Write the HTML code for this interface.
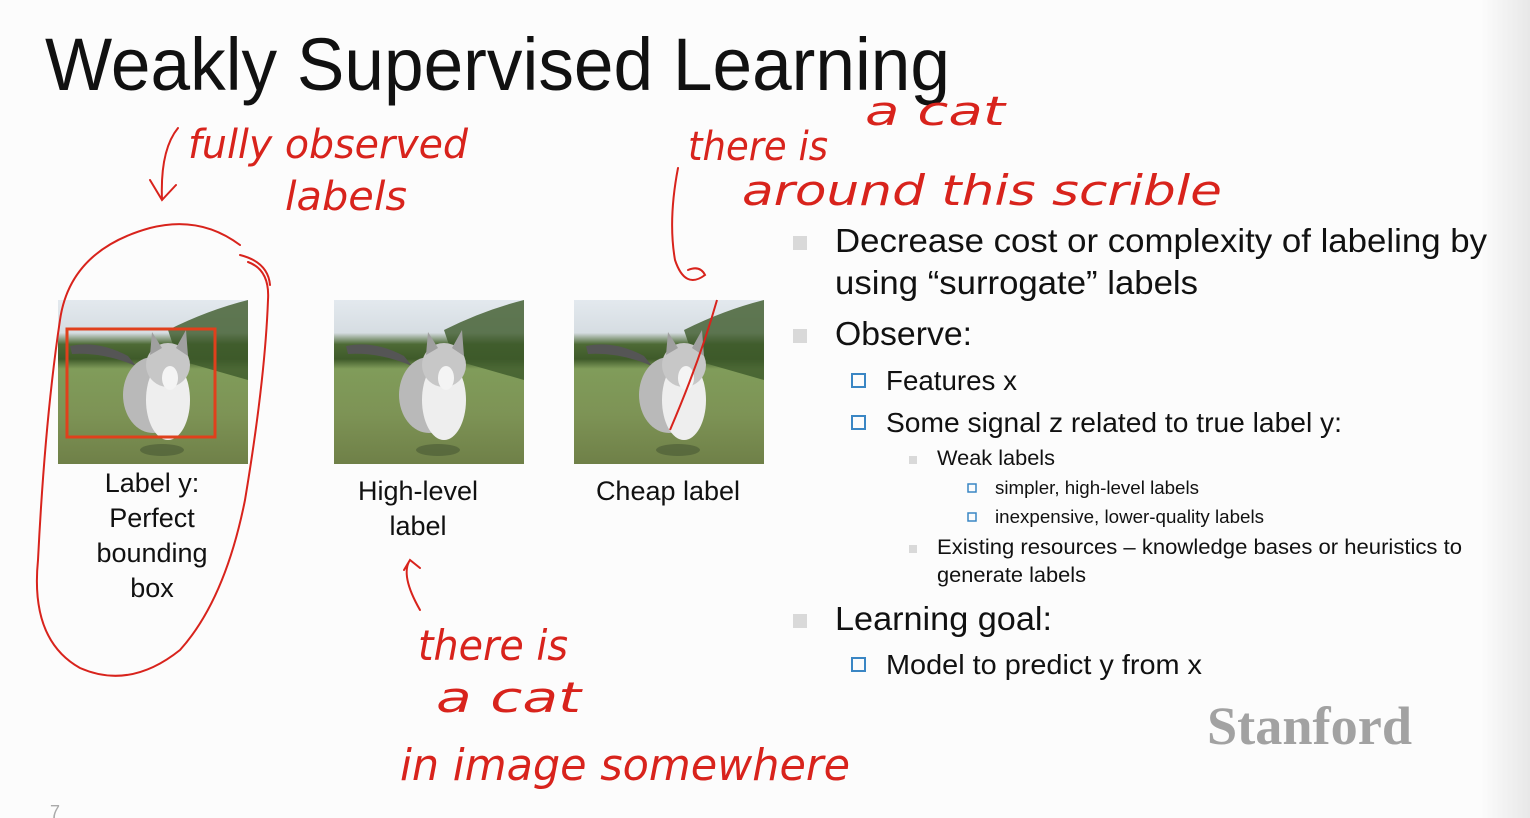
<!DOCTYPE html>
<html><head><meta charset="utf-8"><style>
html,body{margin:0;padding:0;background:#fcfcfc;}
svg{display:block}
.h{font-family:"Liberation Sans",sans-serif;fill:#111}
.r{font-family:"DejaVu Sans",sans-serif;font-style:italic;font-weight:200;fill:#d8231c}
</style></head><body>
<svg width="1530" height="818" viewBox="0 0 1530 818" xmlns="http://www.w3.org/2000/svg">
<defs>
<linearGradient id="edge" x1="0" x2="1"><stop offset="0" stop-color="#fcfcfc"/><stop offset="1" stop-color="#e8e8e8"/></linearGradient>
<linearGradient id="img" x1="0" y1="0" x2="0" y2="1">
<stop offset="0" stop-color="#e3e9ee"/><stop offset="0.2" stop-color="#d6dde2"/><stop offset="0.27" stop-color="#4d6a35"/><stop offset="0.36" stop-color="#3f5a2a"/><stop offset="0.42" stop-color="#809c5a"/><stop offset="0.7" stop-color="#7d9355"/><stop offset="1" stop-color="#6f8048"/></linearGradient>
<g id="cat">
<rect x="0" y="0" width="190" height="164" fill="url(#img)"/>
<path d="M110 30 Q150 10 190 0 L190 80 L120 60 Z" fill="#3d5a2a" opacity="0.8"/>
<path d="M12 46 Q40 40 70 56 L78 66 Q45 52 14 54 Z" fill="#555"/>
<ellipse cx="95" cy="95" rx="30" ry="38" fill="#b9b9b9"/>
<ellipse cx="110" cy="100" rx="22" ry="40" fill="#eeeeee"/>
<ellipse cx="110" cy="65" rx="22" ry="22" fill="#c7c7c7"/>
<path d="M92 55 L94 32 L104 48 Z M118 48 L128 30 L130 56 Z" fill="#a0a0a0"/>
<ellipse cx="112" cy="78" rx="8" ry="12" fill="#f4f4f4"/>
<ellipse cx="104" cy="150" rx="22" ry="6" fill="#405030" opacity="0.5"/>
</g>
</defs>
<rect x="1480" y="0" width="50" height="818" fill="url(#edge)"/>
<text class="h" x="45" y="90" font-size="74" textLength="905" lengthAdjust="spacingAndGlyphs">Weakly Supervised Learning</text>

<use href="#cat" x="58" y="300"/>
<use href="#cat" x="334" y="300"/>
<use href="#cat" x="574" y="300"/>
<rect x="67" y="329" width="148" height="108" fill="none" stroke="#e0401c" stroke-width="3"/>
<path d="M717 300 Q700 360 670 430" fill="none" stroke="#d8231c" stroke-width="2"/>

<g class="h" font-size="27" text-anchor="middle">
<text x="152" y="492">Label y:</text><text x="152" y="527">Perfect</text><text x="152" y="562">bounding</text><text x="152" y="597">box</text>
<text x="418" y="500">High-level</text><text x="418" y="535">label</text>
<text x="668" y="500">Cheap label</text>
</g>

<g fill="#d9d9d9">
<rect x="793" y="236" width="14" height="14"/><rect x="793" y="329" width="14" height="14"/><rect x="793" y="614" width="14" height="14"/>
<rect x="909" y="456" width="8" height="8"/><rect x="909" y="545" width="8" height="8"/>
</g>
<g fill="none" stroke="#3a86c4" stroke-width="2">
<rect x="852" y="374" width="13" height="13"/><rect x="852" y="416" width="13" height="13"/><rect x="852" y="658" width="13" height="13"/>
<rect x="968" y="484" width="8" height="8" stroke-width="1.5"/><rect x="968" y="513" width="8" height="8" stroke-width="1.5"/>
</g>
<g class="h">
<text x="835" y="252" font-size="33" textLength="652" lengthAdjust="spacingAndGlyphs">Decrease cost or complexity of labeling by</text>
<text x="835" y="294" font-size="33" textLength="363" lengthAdjust="spacingAndGlyphs">using “surrogate” labels</text>
<text x="835" y="345" font-size="33" textLength="137" lengthAdjust="spacingAndGlyphs">Observe:</text>
<text x="886" y="390" font-size="28" textLength="131" lengthAdjust="spacingAndGlyphs">Features x</text>
<text x="886" y="432" font-size="28" textLength="456" lengthAdjust="spacingAndGlyphs">Some signal z related to true label y:</text>
<text x="937" y="465" font-size="21" textLength="118" lengthAdjust="spacingAndGlyphs">Weak labels</text>
<text x="995" y="494" font-size="18" textLength="204" lengthAdjust="spacingAndGlyphs">simpler, high-level labels</text>
<text x="995" y="523" font-size="18" textLength="269" lengthAdjust="spacingAndGlyphs">inexpensive, lower-quality labels</text>
<text x="937" y="554" font-size="21" textLength="525" lengthAdjust="spacingAndGlyphs">Existing resources – knowledge bases or heuristics to</text>
<text x="937" y="582" font-size="21" textLength="149" lengthAdjust="spacingAndGlyphs">generate labels</text>
<text x="835" y="630" font-size="33" textLength="217" lengthAdjust="spacingAndGlyphs">Learning goal:</text>
<text x="886" y="674" font-size="28" textLength="316" lengthAdjust="spacingAndGlyphs">Model to predict y from x</text>
</g>
<text x="1207" y="744" font-family="'Liberation Serif',serif" font-weight="bold" font-size="54" fill="#a2a2a2" textLength="205" lengthAdjust="spacingAndGlyphs">Stanford</text>
<text x="50" y="818" font-family="'Liberation Sans',sans-serif" font-size="18" fill="#aaa">7</text>

<g fill="none" stroke="#d8231c" stroke-width="2" stroke-linecap="round">
<path d="M240 255 Q268 262 270 285 M240 245 Q200 215 150 228 Q70 250 60 320 Q45 420 38 560 Q30 640 80 668 Q130 690 180 650 Q225 600 245 500 Q265 380 268 300 Q270 270 248 262"/>
<path d="M178 128 Q160 150 162 200 M150 180 L162 200 L176 185"/>
<path d="M420 610 Q400 575 410 560 M404 570 L410 560 L420 568"/>
<path d="M678 168 Q668 220 675 260 Q685 290 705 275 Q700 265 688 270"/>
</g>
<g class="r">
<text x="188" y="158" font-size="40" textLength="280" lengthAdjust="spacingAndGlyphs">fully observed</text>
<text x="285" y="210" font-size="40" textLength="122" lengthAdjust="spacingAndGlyphs">labels</text>
<text x="688" y="160" font-size="40" textLength="140" lengthAdjust="spacingAndGlyphs">there is</text>
<text x="865" y="125" font-size="40" textLength="140" lengthAdjust="spacingAndGlyphs">a cat</text>
<text x="742" y="205" font-size="42" textLength="480" lengthAdjust="spacingAndGlyphs">around this scrible</text>
<text x="418" y="660" font-size="42" textLength="150" lengthAdjust="spacingAndGlyphs">there is</text>
<text x="436" y="712" font-size="42" textLength="145" lengthAdjust="spacingAndGlyphs">a cat</text>
<text x="400" y="780" font-size="44" textLength="450" lengthAdjust="spacingAndGlyphs">in image somewhere</text>
</g>
</svg>
</body></html>
